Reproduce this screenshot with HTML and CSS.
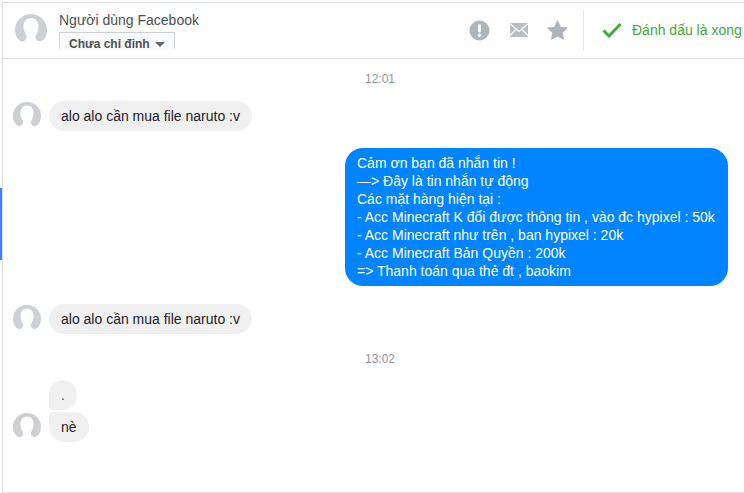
FILE: index.html
```html
<!DOCTYPE html>
<html lang="en">
<head>
    <meta charset="UTF-8">
    <meta name="viewport" content="width=device-width, initial-scale=1.0">
    <title>Người dùng Facebook</title>
    <link rel="stylesheet" href="styles.css">
</head>
<body>
    <div class="active-bar"></div>
    <div class="thread">
        <div class="header">
            <svg class="avatar-big" viewBox="0 0 32 32"><use href="#person"></use></svg>
            <div class="title">
                <div class="name">Người dùng Facebook</div>
                <div class="assign">Chưa chỉ định <span class="caret"></span></div>
            </div>
            <div class="actions">
                <svg class="icon icon-alert" viewBox="0 0 22 22">
                    <circle cx="11" cy="11" r="10.5" fill="#b0b4bd"/>
                    <rect x="9.4" y="4.5" width="3.2" height="8.5" rx="1.4" fill="#fff"/>
                    <circle cx="11" cy="16" r="1.8" fill="#fff"/>
                </svg>
                <svg class="icon icon-mail" viewBox="0 0 18 14">
                    <path d="M0 0H18L9 7.6Z" fill="#b8bcc4"/>
                    <path d="M0 1.6L5.4 6.2 0 11.6ZM18 1.6L12.6 6.2 18 11.6ZM6.3 7L9 9.3 11.7 7 18 13.6V14H0V13.6Z" fill="#b8bcc4"/>
                </svg>
                <svg class="icon icon-star" viewBox="0 0 22 21">
                    <path d="M11 1L14 7.6 21 8.4 15.8 13.1 17.2 20 11 16.5 4.8 20 6.2 13.1 1 8.4 8 7.6Z" fill="#b0b4bd" stroke="#b0b4bd" stroke-width="1.2" stroke-linejoin="round"/>
                </svg>
            </div>
            <div class="done">
                <svg class="icon-check" viewBox="0 0 20 16">
                    <path d="M1.5 8.5L7 14 18.5 2" fill="none" stroke="#42ab3a" stroke-width="3"/>
                </svg>
                <span>Đánh dấu là xong</span>
            </div>
        </div>

        <div class="messages">
            <div class="time time-first">12:01</div>
            <div class="row">
                <svg class="avatar" viewBox="0 0 32 32"><use href="#person"></use></svg>
                <div class="bubble">alo alo cần mua file naruto :v</div>
            </div>
            <div class="row row-me">
                <div class="bubble-me">
                    Cảm ơn bạn đã nhắn tin !<br>
                    —&gt; Đây là tin nhắn tự động<br>
                    Các mặt hàng hiện tại :<br>
                    - Acc Minecraft K đổi được thông tin , vào đc hypixel : 50k<br>
                    - Acc Minecraft như trên , ban hypixel : 20k<br>
                    - Acc Minecraft Bản Quyền : 200k<br>
                    =&gt; Thanh toán qua thẻ đt , baokim
                </div>
            </div>
            <div class="row row-again">
                <svg class="avatar" viewBox="0 0 32 32"><use href="#person"></use></svg>
                <div class="bubble">alo alo cần mua file naruto :v</div>
            </div>
            <div class="time time-second">13:02</div>
            <div class="group">
                <div class="row">
                    <div class="avatar-space"></div>
                    <div class="bubble bubble-top">.</div>
                </div>
                <div class="row">
                    <svg class="avatar" viewBox="0 0 32 32"><use href="#person"></use></svg>
                    <div class="bubble bubble-bottom">nè</div>
                </div>
            </div>
        </div>
    </div>

    <svg class="defs" width="0" height="0">
        <defs>
            <g id="person">
                <circle cx="16" cy="16" r="16" fill="#ccd0d5"/>
                <path d="M16 4C11 4 8.5 8 8.5 13 8.5 17 10.5 20 11.5 22 12 24 11 26 9 27 7 28 4 27 2 24V33H30V24C28 27 25 28 23 27 21 26 20 24 20.5 22 21.5 20 23.5 17 23.5 13 23.5 8 21 4 16 4Z" fill="#fff"/>
            </g>
        </defs>
    </svg>
</body>
</html>
```
FILE: styles.css
```css
html, body {
    height: 100%;
}
body {
    margin: 0;
    padding: 2px 0 0 2px;
    box-sizing: border-box;
    background-color: #fff;
    font-family: "Liberation Sans", Arial, sans-serif;
    font-size: 14px;
    color: #1d2129;
    overflow: hidden;
}
.defs {
    position: absolute;
}
.active-bar {
    position: absolute;
    left: 0;
    top: 188px;
    width: 2px;
    height: 72px;
    background-color: #4080ff;
}
.thread {
    height: 491px;
    box-sizing: border-box;
    border: 1px solid #dddfe2;
    border-right: none;
}
.header {
    display: flex;
    align-items: center;
    height: 56px;
    box-sizing: border-box;
    border-bottom: 1px solid #dddfe2;
    padding-left: 12px;
    padding-bottom: 1px;
}
.avatar-big {
    width: 32px;
    height: 32px;
    margin-right: 12px;
    flex: none;
}
.title {
    align-self: flex-start;
    height: 46px;
    overflow: hidden;
    padding-top: 9px;
    box-sizing: border-box;
    width: 150px;
}
.name {
    line-height: 17px;
    color: #4b4f56;
}
.assign {
    width: 116px;
    height: 18px;
    margin-top: 3px;
    box-sizing: border-box;
    border: 1px solid #ced0d4;
    border-bottom-color: #e4e6eb;
    background-color: #f9fafb;
    font-size: 12px;
    font-weight: bold;
    line-height: 22px;
    color: #4b4f56;
    text-align: center;
    overflow: hidden;
}
.caret {
    display: inline-block;
    width: 0;
    height: 0;
    margin-left: 2px;
    vertical-align: middle;
    border-left: 5px solid transparent;
    border-right: 5px solid transparent;
    border-top: 5px solid #606770;
}
.actions {
    display: flex;
    align-items: center;
    margin-left: auto;
    height: 40px;
    padding-right: 15px;
    border-right: 1px solid #e4e6eb;
}
.icon {
    flex: none;
}
.icon-alert {
    width: 21px;
    height: 21px;
}
.icon-mail {
    width: 18px;
    height: 14px;
    margin-left: 20px;
}
.icon-star {
    width: 21px;
    height: 20px;
    margin-left: 19px;
}
.done {
    display: flex;
    align-items: center;
    color: #42ab3a;
    font-size: 14px;
    padding-left: 18px;
    width: 160px;
    box-sizing: border-box;
    white-space: nowrap;
}
.icon-check {
    width: 20px;
    height: 16px;
    margin-right: 10px;
    flex: none;
}
.messages {
    padding: 0 16px 0 10px;
}
.time {
    text-align: center;
    font-size: 12px;
    line-height: 14px;
    color: #90949c;
    padding-left: 19px;
}
.time-first {
    margin-top: 13px;
    margin-bottom: 15px;
}
.time-second {
    margin-top: 18px;
    margin-bottom: 14px;
}
.row {
    display: flex;
    align-items: flex-end;
}
.row-me {
    justify-content: flex-end;
    margin-top: 17px;
}
.row-again {
    margin-top: 18px;
}
.avatar {
    width: 28px;
    height: 28px;
    margin-right: 8px;
    margin-bottom: 1px;
    flex: none;
}
.avatar-space {
    width: 36px;
    flex: none;
}
.bubble {
    background-color: #f1f0f0;
    border-radius: 15px;
    padding: 6px 12px;
    line-height: 18px;
    color: #1d2129;
}
.bubble-top {
    border-bottom-left-radius: 4px;
    margin-bottom: 2px;
    color: #4b4f56;
}
.bubble-bottom {
    border-top-left-radius: 4px;
}
.bubble-me {
    width: 383px;
    box-sizing: border-box;
    background-color: #0084ff;
    border-radius: 18px;
    padding: 6px 12px;
    line-height: 18px;
    color: #fff;
}
```
